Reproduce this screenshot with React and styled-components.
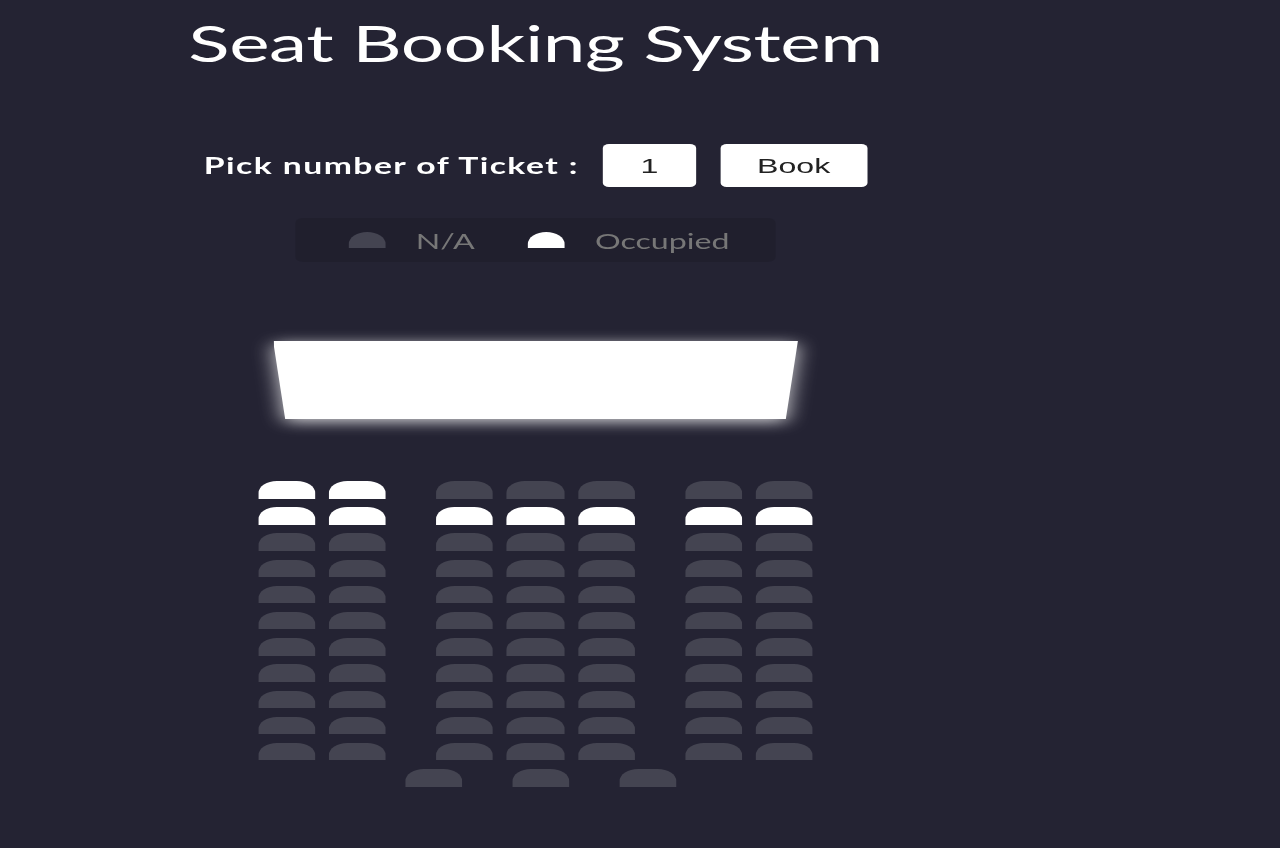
import React, { useState } from 'react';
import styled, { createGlobalStyle } from 'styled-components';

const GlobalStyle = createGlobalStyle`
    body {
        margin: 0;
        background-color: #242333;
        overflow: hidden;
    }
`;

// the whole page is drawn stretched sideways, as in the reference
const Stage = styled.div`
    width: 836.6px;
    min-height: 848px;
    transform: scaleX(1.53);
    transform-origin: 0 0;
    font-family: Lato, "Liberation Sans", sans-serif;
    color: #fff;
`;

const Column = styled.div`
    width: 700px;
    display: flex;
    flex-direction: column;
    align-items: center;
`;

const Title = styled.h1`
    margin: 17px 0 0;
    font-size: 50px;
    line-height: 52px;
    font-weight: 400;
    letter-spacing: -0.3px;
`;

const Controls = styled.div`
    display: flex;
    align-items: center;
    gap: 15.8px;
    margin-top: 75px;
`;

const Label = styled.label`
    font-size: 22px;
    font-weight: 700;
    letter-spacing: 0.95px;
`;

const TicketInput = styled.input`
    width: 60.8px;
    height: 43px;
    box-sizing: border-box;
    border: none;
    border-radius: 4px;
    text-align: center;
    font-family: "Liberation Sans", Arial, sans-serif;
    font-size: 21px;
    color: #222;
    outline: none;
`;

const Button = styled.button`
    width: 96px;
    height: 43px;
    border: none;
    border-radius: 4px;
    background-color: #fff;
    font-family: "Liberation Sans", Arial, sans-serif;
    font-size: 21px;
    color: #222;
    cursor: pointer;
`;

const Legend = styled.ul`
    display: flex;
    align-items: center;
    gap: 35px;
    margin: 31px 0 0;
    padding: 0 30px 0 35px;
    height: 44px;
    list-style: none;
    background-color: rgba(0, 0, 0, 0.1);
    border-radius: 5px;
    color: #777;
    font-size: 21px;
`;

const LegendItem = styled.li`
    display: flex;
    align-items: center;
    gap: 20px;
`;

const Seat = styled.div`
    width: ${props => (props.small ? '23.5px' : '37.25px')};
    height: ${props => (props.small ? '16px' : '17.5px')};
    background-color: ${props => (props.occupied ? '#fff' : '#444451')};
    border-top-left-radius: 12px;
    border-top-right-radius: 12px;
`;

const ScreenGlow = styled.div`
    margin-top: 79px;
    filter: drop-shadow(0 3px 7px rgba(255, 255, 255, 0.8));
`;

const Screen = styled.div`
    width: 343px;
    height: 78px;
    background-color: #fff;
    clip-path: polygon(0 0, 100% 0, 97.7% 100%, 2.3% 100%);
`;

const Hall = styled.div`
    display: flex;
    flex-direction: column;
    gap: 8.7px;
    margin-top: 62px;
`;

const Row = styled.div`
    display: flex;
    justify-content: center;
    gap: 32.7px;
    margin-left: ${props => props.shift || 0}px;
`;

const Block = styled.div`
    display: flex;
    gap: 9.2px;
`;

const blocks = [2, 3, 2];

const isOccupied = (row, index) => row === 1 || (row === 0 && index < 2);

const App = () => {
    const [tickets, setTickets] = useState('1');

    const rows = [];
    for (let r = 0; r < 11; r++) {
        let index = 0;
        rows.push(
            <Row key={r}>
                {blocks.map((size, b) => (
                    <Block key={b}>
                        {Array.from({ length: size }).map(() => {
                            const i = index++;
                            return <Seat key={i} occupied={isOccupied(r, i)} />;
                        })}
                    </Block>
                ))}
            </Row>
        );
    }

    return (
        <Stage>
            <GlobalStyle />
            <Column>
                <Title>Seat Booking System</Title>
                <Controls>
                    <Label htmlFor="tickets">Pick number of Ticket :</Label>
                    <TicketInput
                        id="tickets"
                        type="text"
                        value={tickets}
                        onChange={e => setTickets(e.target.value)}
                    />
                    <Button>Book</Button>
                </Controls>
                <Legend>
                    <LegendItem>
                        <Seat small />
                        <span>N/A</span>
                    </LegendItem>
                    <LegendItem>
                        <Seat small occupied />
                        <span>Occupied</span>
                    </LegendItem>
                </Legend>
                <ScreenGlow>
                    <Screen />
                </ScreenGlow>
                <Hall>
                    {rows}
                    <Row shift={6.6}>
                        <Seat />
                        <Seat />
                        <Seat />
                    </Row>
                </Hall>
            </Column>
        </Stage>
    );
};

export default App;
